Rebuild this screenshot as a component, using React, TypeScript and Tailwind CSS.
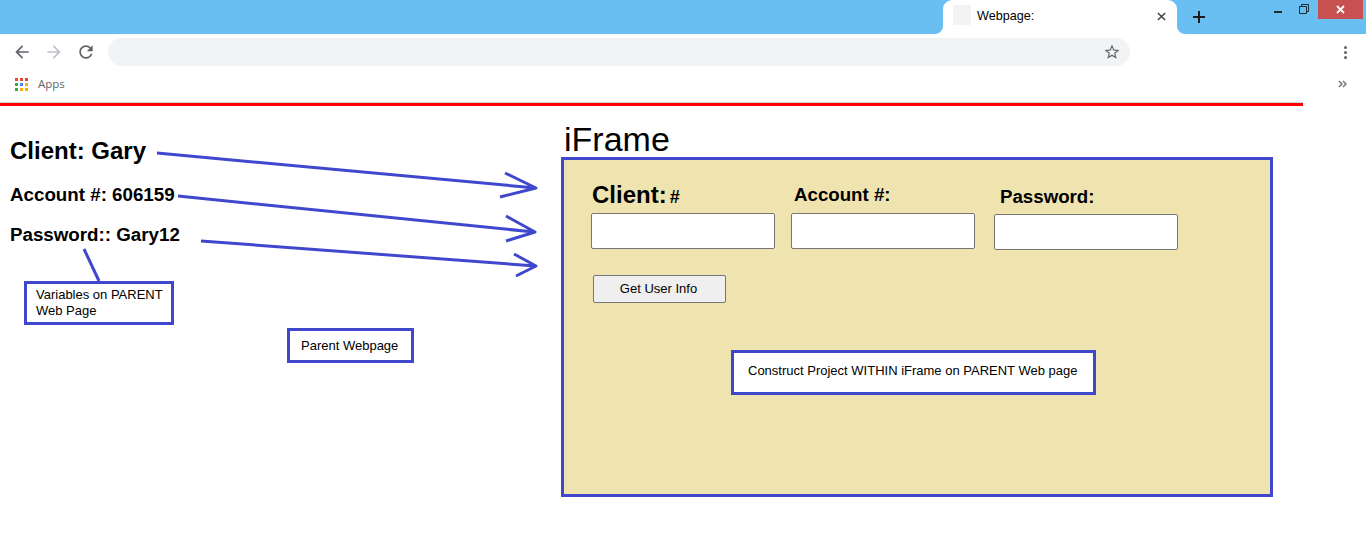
const APP_DOTS = [
    "bg-[#ea4335]", "bg-[#ea4335]", "bg-[#ea4335]",
    "bg-[#34a853]", "bg-[#4285f4]", "bg-[#fbac00]",
    "bg-[#34a853]", "bg-[#fbac00]", "bg-[#fbac00]",
];

function Icon({ d, className }: { d: string; className: string }) {
    return (
        <svg viewBox="0 0 24 24" className={className} fill="currentColor">
            <path d={d} />
        </svg>
    );
}

function TabStrip() {
    return (
        <div className="flex h-[34px] bg-white">
            <div className="flex-1 bg-[#69bff1] rounded-br-[8px]" />
            <div className="w-[234px] bg-[#69bff1]">
                <div className="h-full bg-white rounded-t-[9px] flex items-center pl-[10px] pr-[10px]">
                    <div className="w-[18px] h-[20px] -mt-[5px] bg-[#f1f3f4]" />
                    <span className="ml-[6px] -mt-[2px] text-[12.6px] text-black">Webpage:</span>
                    <svg viewBox="0 0 10 10" className="ml-auto -mt-[2px] mr-[1px] w-[9px] h-[9px] text-[#3c4043]" stroke="currentColor" strokeWidth="1.6">
                        <path d="M1 1l8 8M9 1l-8 8" />
                    </svg>
                </div>
            </div>
            <div className="w-[189px] bg-[#69bff1] rounded-bl-[8px] flex items-start">
                <svg viewBox="0 0 12 12" className="ml-[16px] mt-[11px] w-[12px] h-[12px] text-[#1c1c1c]" stroke="currentColor" strokeWidth="2">
                    <path d="M6 0v12M0 6h12" />
                </svg>
                <div className="ml-[69px] mt-[11px] w-[8px] h-[2px] bg-[#1c2b36]" />
                <svg viewBox="0 0 10 10" className="ml-[17px] mt-[4px] w-[10px] h-[10px] text-[#1c2b36]" fill="none" stroke="currentColor" strokeWidth="1">
                    <path d="M.5 2.5h7v7h-7zM2.5 2.5v-2h7v7h-2" />
                </svg>
                <div className="ml-[9px] w-[45px] h-[19px] bg-[#c75050] flex items-center justify-center">
                    <svg viewBox="0 0 9 9" className="w-[9px] h-[9px] text-white" stroke="currentColor" strokeWidth="1.8">
                        <path d="M1 1l7 7M8 1l-7 7" />
                    </svg>
                </div>
            </div>
        </div>
    );
}

function Toolbar() {
    return (
        <div className="flex items-center h-[36px] pl-[12px]">
            <Icon className="w-[20px] h-[20px] text-[#5f6368]" d="M20 11H7.83l5.59-5.59L12 4l-8 8 8 8 1.41-1.41L7.83 13H20v-2z" />
            <Icon className="ml-[12px] w-[20px] h-[20px] text-[#bdc1c6]" d="M12 4l-1.41 1.41L16.17 11H4v2h12.17l-5.58 5.59L12 20l8-8z" />
            <Icon className="ml-[12px] w-[20px] h-[20px] text-[#5f6368]" d="M17.65 6.35C16.2 4.9 14.21 4 12 4c-4.42 0-7.99 3.58-7.99 8s3.57 8 7.99 8c3.73 0 6.84-2.55 7.73-6h-2.08c-.82 2.33-3.04 4-5.65 4-3.31 0-6-2.69-6-6s2.69-6 6-6c1.66 0 3.14.69 4.22 1.78L13 11h7V4l-2.35 2.35z" />
            <div className="ml-[12px] w-[1022px] h-[28px] bg-[#f1f3f4] rounded-full flex items-center justify-end pr-[9px]">
                <Icon className="w-[18px] h-[18px] text-[#5f6368]" d="M22 9.24l-7.19-.62L12 2 9.19 8.63 2 9.24l5.46 4.73L5.82 21 12 17.27 18.18 21l-1.63-7.03L22 9.24zM12 15.4l-3.76 2.27 1-4.28-3.32-2.88 4.38-.38L12 6.1l1.71 4.04 4.38.38-3.32 2.88 1 4.28L12 15.4z" />
            </div>
            <div className="ml-auto mr-[19px] flex flex-col gap-[2px]">
                <div className="w-[3px] h-[3px] rounded-full bg-[#5f6368]" />
                <div className="w-[3px] h-[3px] rounded-full bg-[#5f6368]" />
                <div className="w-[3px] h-[3px] rounded-full bg-[#5f6368]" />
            </div>
        </div>
    );
}

function Bookmarks() {
    return (
        <div className="flex items-center h-[32px] pl-[15px] pb-[4px]">
            <div className="grid grid-cols-3 gap-[2px]">
                {APP_DOTS.map((dot, i) => (
                    <div key={i} className={"w-[3px] h-[3px] " + dot} />
                ))}
            </div>
            <span className="ml-[10px] text-[11.5px] text-[#5f6368] font-['Open_Sans',sans-serif]">Apps</span>
            <svg viewBox="0 0 9 8" className="ml-auto mr-[19px] w-[9px] h-[8px] text-[#70757a]" fill="none" stroke="currentColor" strokeWidth="1.5">
                <path d="M1 1l3 3-3 3M5 1l3 3-3 3" />
            </svg>
        </div>
    );
}

function NoteBox({ className, children }: { className: string; children: React.ReactNode }) {
    return (
        <div className={"border-[3px] border-[#3f48cc] bg-white text-[13px] text-black " + className}>
            {children}
        </div>
    );
}

function Field({ label, className }: { label: React.ReactNode; className: string }) {
    return (
        <div className={"w-[184px] flex flex-col " + className}>
            {label}
            <input className="w-[184px] h-[36px] bg-white border border-[#767676] rounded-[2px]" />
        </div>
    );
}

// hand-drawn arrows and the pointer line on top of the page
function Annotations() {
    return (
        <svg className="absolute left-0 top-0 w-[1366px] h-[545px] pointer-events-none" viewBox="0 0 1366 545" fill="none" stroke="#3f48cc" strokeWidth="3" strokeLinejoin="round">
            <path d="M157 153L536 188M505 173L536 188L500 197" />
            <path d="M178 196L534 232M506 216L535 232L506 241" />
            <path d="M201 241L536 266M514 254L536 266L516 276" />
            <path d="M84 249L99 281" />
        </svg>
    );
}

export default function App() {
    return (
        <div className="relative w-[1366px] h-[545px] overflow-hidden bg-white font-['Liberation_Sans',Arial,sans-serif]">
            <TabStrip />
            <Toolbar />
            <Bookmarks />
            <div className="w-[1303px] h-[4px] bg-[#ff0000] border-t border-[#d3d6da]" />

            <div className="flex">
                <div className="w-[561px] pl-[10px] pt-[31px] text-black font-bold">
                    <div className="text-[24px] leading-[28px]">Client: Gary</div>
                    <div className="mt-[19px] text-[18.75px] leading-[22px]">Account #: 606159</div>
                    <div className="mt-[18px] text-[18.75px] leading-[22px]">Password:: Gary12</div>
                    <NoteBox className="mt-[35px] ml-[14px] w-[150px] h-[44px] pl-[9px] pt-[3px] font-normal leading-[16px]">
                        Variables on PARENT Web Page
                    </NoteBox>
                    <NoteBox className="mt-[3px] ml-[277px] w-[127px] h-[35px] pl-[11px] font-normal flex items-center">
                        Parent Webpage
                    </NoteBox>
                </div>

                <div className="w-[712px] pt-[12px]">
                    <div className="pl-[3px] pt-[2px] h-[39px] text-[34px] leading-[39px] text-black">iFrame</div>
                    <div className="w-[712px] h-[340px] border-[3px] border-[#3f48cc] bg-[#efe4b0]">
                        <div className="flex items-start pt-[20px] pl-[27px]">
                            <Field
                                className=""
                                label={
                                    <div className="pl-[1px] pt-[1px] h-[33px] font-bold text-black text-[24px] leading-[28px]">
                                        Client:<span className="ml-[3px] text-[18px]">#</span>
                                    </div>
                                }
                            />
                            <Field
                                className="ml-[16px]"
                                label={<div className="pl-[3px] h-[33px] pt-[3px] font-bold text-black text-[18.7px] leading-[24px]">Account #:</div>}
                            />
                            <Field
                                className="ml-[19px]"
                                label={<div className="pl-[6px] h-[34px] pt-[5px] font-bold text-black text-[18.7px] leading-[24px]">Password:</div>}
                            />
                        </div>
                        <button className="block mt-[25px] ml-[29px] w-[133px] h-[28px] pr-[2px] bg-[#efefef] border border-[#767676] rounded-[2px] text-[13px] text-black">
                            Get User Info
                        </button>
                        <NoteBox className="mt-[47px] ml-[167px] w-[365px] h-[45px] pl-[14px] pb-[4px] flex items-center">
                            Construct Project WITHIN iFrame on PARENT Web page
                        </NoteBox>
                    </div>
                </div>
            </div>

            <Annotations />
        </div>
    );
}
